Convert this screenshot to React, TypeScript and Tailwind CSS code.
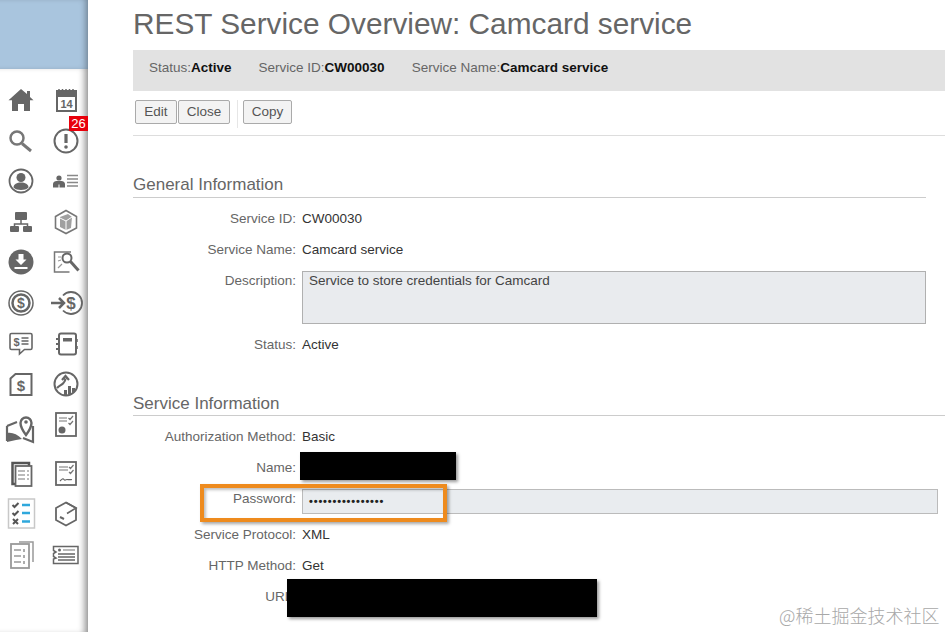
import React from 'react';

const G = '#666666';

const Icon = ({ children }: { children: React.ReactNode }) => (
    <svg viewBox="0 0 32 32" className="h-8 w-8 overflow-visible" fill="none" stroke={G} strokeWidth={2}>
        {children}
    </svg>
);

const sidebarIcons: React.ReactNode[] = [
    // home
    <path key="home" d="M16 5l6 5V7h3v6l3.500 3.200H25V27h-6v-7h-6v7H7V16.200H3.500z" fill={G} stroke="none" />,
    // calendar
    <g key="cal">
        <rect x="7" y="7" width="19" height="20" strokeWidth="2" />
        <rect x="7" y="7" width="19" height="6" fill={G} stroke="none" />
        <path d="M9 5v3M12.500 5v3M16 5v3M19.500 5v3M23 5v3" strokeWidth="1.500" />
        <text x="16.500" y="24" textAnchor="middle" fontSize="11" fontWeight="700" fill={G} stroke="none">14</text>
    </g>,
    // search
    <g key="search">
        <circle cx="12" cy="13" r="6.500" strokeWidth="2.500" stroke="#777777" />
        <path d="M17 18.500l9 7.500" strokeWidth="3" stroke="#777777" />
    </g>,
    // alert
    <g key="alert">
        <circle cx="16" cy="16" r="11.500" strokeWidth="2" />
        <path d="M16 9v9" strokeWidth="3.200" />
        <circle cx="16" cy="22" r="1.800" fill={G} stroke="none" />
    </g>,
    // user circle
    <g key="user">
        <circle cx="16" cy="16" r="11.500" strokeWidth="1.800" />
        <circle cx="16" cy="12.500" r="4.500" fill={G} stroke="none" />
        <path d="M8.500 22.500c0-3.500 3.500-5 7.500-5s7.500 1.500 7.500 5c-2 1.800-4.500 2.500-7.500 2.500s-5.500-.7-7.500-2.500z" fill={G} stroke="none" />
    </g>,
    // contact list
    <g key="contacts">
        <circle cx="9" cy="13" r="2.600" fill={G} stroke="none" />
        <path d="M3 22.500v-3.500c0-2 2-3 3.500-3h5c1.500 0 3.500 1 3.500 3v3.500h-5.500v-3h-1v3z" fill={G} stroke="none" />
        <path d="M17 10.500h11M17 14h11M17 17.500h11M17 21h11" strokeWidth="1.500" stroke="#888888" />
    </g>,
    // org chart
    <g key="org">
        <rect x="10" y="6" width="12" height="8" rx="1" fill={G} stroke="none" />
        <path d="M16 14v4M9.500 21v-3h13v3" strokeWidth="1.500" />
        <rect x="5" y="20" width="9" height="6" rx="1" fill={G} stroke="none" />
        <rect x="18" y="20" width="9" height="6" rx="1" fill={G} stroke="none" />
    </g>,
    // package
    <g key="pkg">
        <path d="M16 4.500l10.500 6v11.500L16 27.500 5.500 22V10.500z" strokeWidth="1.600" stroke="#777777" />
        <path d="M10 11l8-3 4 3-1 11-5 2-6-3z" fill="#a0a0a0" stroke="none" />
        <path d="M10 12l6 3 6-4M16 15v9" stroke="#ffffff" strokeWidth="1" />
    </g>,
    // download
    <g key="download">
        <circle cx="16" cy="16" r="12.500" fill={G} stroke="none" />
        <path d="M13.500 8h5v5.500h3L16 19l-5.500-5.500h3zM9.500 21h13v2h-13z" fill="#ffffff" stroke="none" />
    </g>,
    // chart search
    <g key="chart-search">
        <path d="M21 6H4.500v20h15" strokeWidth="1.500" stroke="#777777" />
        <path d="M8 22l4-4M8 11h3M8 15l3-1" strokeWidth="1.200" stroke="#999999" />
        <circle cx="17" cy="12" r="4.500" strokeWidth="2" />
        <path d="M20.500 15.500l8 9" strokeWidth="3" />
    </g>,
    // dollar circle
    <g key="dollar">
        <circle cx="16" cy="16" r="12" strokeWidth="1.500" />
        <circle cx="16" cy="16" r="8.500" strokeWidth="2.500" />
        <text x="16" y="21" textAnchor="middle" fontSize="14" fontWeight="700" fill={G} stroke="none">$</text>
    </g>,
    // arrow dollar
    <g key="arrow-dollar">
        <path d="M13 8.500a11 11 0 1 1 0 15" strokeWidth="1.800" />
        <path d="M1 16h12M9 11l5 5-5 5" strokeWidth="2.500" />
        <text x="21" y="22" textAnchor="middle" fontSize="17" fontWeight="700" fill={G} stroke="none">$</text>
    </g>,
    // chat bill
    <g key="chat">
        <path d="M6.500 5.500h19a1.500 1.500 0 0 1 1.500 1.500v13a1.500 1.500 0 0 1-1.500 1.500h-6l-5 4.500v-4.500h-8A1.500 1.500 0 0 1 5 20V7a1.500 1.500 0 0 1 1.500-1.500z" strokeWidth="1.600" />
        <text x="11.500" y="18" textAnchor="middle" fontSize="11" fontWeight="700" fill={G} stroke="none">$</text>
        <path d="M16.500 10h7M16.500 13h7M16.500 16h7" strokeWidth="1.500" />
    </g>,
    // notebook
    <g key="notebook">
        <path d="M9 7.500c0-1 .7-2 2-2h13c1 0 2 1 2 2v17c0 1-1 2-2 2H11c-1.300 0-2-1-2-2z" strokeWidth="2" />
        <rect x="13" y="10" width="9" height="3.500" fill={G} stroke="none" />
        <path d="M6 11h4M6 16h4M6 21h4" strokeWidth="2" />
        <path d="M27 11v3M27 18v3" strokeWidth="1.500" />
    </g>,
    // bill page
    <g key="bill">
        <path d="M5.500 10.500l5-4.500h16v21h-21z" strokeWidth="2" />
        <text x="16" y="22.500" textAnchor="middle" fontSize="15" fontWeight="700" fill={G} stroke="none">$</text>
    </g>,
    // growth
    <g key="growth">
        <circle cx="16" cy="16" r="11.500" strokeWidth="2" />
        <path d="M7 20c2-2.500 4-2.500 6-4.500 1.500-1.500 2.500-3 2.500-5M12 12l3.500-4 3.500 4" strokeWidth="2.200" />
        <path d="M14 27v-5h3v5zM18 27v-9h3v8zM22 25v-5h3v3z" fill={G} stroke="none" />
    </g>,
    // map pin
    <g key="map">
        <path d="M2 17l10-4M2 17v15M28 17v16l-10-4" strokeWidth="2.200" />
        <path d="M2 24c5-1 10 1 15 6l-6 1-9 2z" fill={G} stroke="none" />
        <path d="M21 26c-3-4-5.500-8-5.500-12a5.500 5.500 0 0 1 11 0c0 4-2.500 8-5.500 12z" fill="#ffffff" strokeWidth="2.400" />
        <circle cx="21" cy="13" r="1.800" fill={G} stroke="none" />
    </g>,
    // report
    <g key="report">
        <rect x="6" y="4" width="20" height="23" strokeWidth="1.800" />
        <path d="M9 9h8M9 12h8M18.500 9l1.500 1.500 3-3.500M18.500 14l1.500 1.500 3-3.500" strokeWidth="1.200" stroke="#777777" />
        <circle cx="12" cy="21" r="3.500" fill={G} stroke="none" />
    </g>,
];

const lowerIcons: React.ReactNode[] = [
    // document stack
    <g key="docs">
        <path d="M10 27H7.500V6H24v3" strokeWidth="2.500" stroke="#555555" />
        <rect x="10.500" y="9" width="16" height="20" strokeWidth="1.800" />
        <path d="M13 14h7M13 18h7M13 22h7M22 14h2M22 18h2M22 22h2" strokeWidth="1.100" stroke="#777777" />
    </g>,
    // signed report
    <g key="signed">
        <rect x="6" y="5" width="20" height="23" strokeWidth="1.800" />
        <path d="M9 10h9M9 13h9M19 10l1.500 1.500 3-3.500M19 15l1.500 1.500 3-3.500" strokeWidth="1.200" stroke="#777777" />
        <path d="M10 24c2-2 3-3 4-1.500s2 0 3 0 3 .5 5 0" strokeWidth="1.200" />
    </g>,
    // checklist, highlighted
    <g key="checklist">
        <rect x="3.500" y="1" width="26" height="29" stroke="#c8c8c8" strokeWidth="1.500" />
        <path d="M7.500 7l2 2 4-4M7.500 15l2 2 4-4M8 21l5 5M13 21l-5 5" strokeWidth="2" stroke="#555555" />
        <path d="M17 7h8M17 15h8M17 23.500h8" stroke="#2fa8dc" strokeWidth="2.400" />
    </g>,
    // cube
    <g key="cube">
        <path d="M16 4.500l10 5.500v12l-10 5.500-10-5.500V10z" strokeWidth="1.800" />
        <path d="M16 4.500l10 5.500-9 5.500" strokeWidth="1.600" />
        <path d="M10 19l4 2" strokeWidth="2" />
    </g>,
    // grey documents
    <g key="gdocs">
        <path d="M14 3h14v20" stroke="#999999" strokeWidth="1.500" />
        <rect x="6" y="5" width="18" height="24" stroke="#999999" strokeWidth="1.800" />
        <path d="M9 11h7M9 17h7M9 23h7M19 10v3M19 16v3M19 22v3" stroke="#999999" strokeWidth="1.600" />
    </g>,
    // ticket
    <g key="ticket">
        <path d="M3.500 7.500H28v17H3.500v-4.500l2.500-1-2.500-1.500v-3l2.500-1.500-2.500-1.500z" strokeWidth="1.500" />
        <circle cx="9.500" cy="11" r="1.500" fill={G} stroke="none" />
        <path d="M13 11h12" strokeWidth="1.200" stroke="#888888" />
        <path d="M8 15h17M8 18h17M8 21h17" strokeWidth="1.500" />
    </g>,
];

const Row = ({ label, children }: { label: string; children: React.ReactNode }) => (
    <div className="flex h-[31px] items-center gap-[6px] pt-[2px]">
        <div className="w-[163px] text-right text-[#666]">{label}</div>
        <div className="text-[#333]">{children}</div>
    </div>
);

const Heading = ({ children, className }: { children: string; className: string }) => (
    <div className={`mb-[5px] h-[26px] border-b border-[#ccc] text-[17px] leading-[24px] text-[#666] ${className}`}>
        {children}
    </div>
);

const Btn = ({ children, width }: { children: string; width: string }) => (
    <button className={`h-[24px] rounded-[2px] border border-[#aaa] bg-[#f3f3f3] text-[13.5px] leading-none text-[#555] ${width}`}>
        {children}
    </button>
);

const Meta = ({ label, value }: { label: string; value: string }) => (
    <span className="text-[#666]">
        {label}
        <b className="font-bold text-[#111]">{value}</b>
    </span>
);

export default function App() {
    return (
        <div className="relative flex h-[632px] w-[945px] overflow-hidden bg-white font-['Liberation_Sans',Arial,sans-serif] text-[13.5px]">
            <aside className="flex w-[88px] shrink-0 flex-col">
                <div className="h-[69px] bg-[#a9c5de] shadow-[inset_-5px_0_6px_-3px_rgba(0,0,0,0.35)]" />
                <div className="relative flex-1 pl-[5px] pt-[15px] shadow-[inset_-7px_0_7px_-4px_rgba(0,0,0,0.45)]">
                    <div className="grid grid-cols-[32px_32px] gap-x-[13px] gap-y-[8.6px]">
                        {sidebarIcons.map((icon, i) => (
                            <Icon key={i}>{icon}</Icon>
                        ))}
                    </div>
                    <div className="mt-[16px] grid grid-cols-[32px_32px] gap-x-[13px] gap-y-[9px]">
                        {lowerIcons.map((icon, i) => (
                            <Icon key={i}>{icon}</Icon>
                        ))}
                    </div>
                    <span className="absolute left-[69px] top-[47px] h-[15px] w-[19px] bg-[#e8000b] text-center text-[13px] leading-[15px] text-white">
                        26
                    </span>
                </div>
            </aside>

            <main className="flex-1 pl-[45px]">
                <h1 className="h-[50px] pt-[5px] text-[29.8px] leading-[38px] text-[#666]">
                    REST Service Overview: Camcard service
                </h1>
                <div className="flex h-[41px] gap-[27px] bg-[#e2e2e2] pl-[16px] pt-[9px] leading-[17px]">
                    <Meta label="Status:" value="Active" />
                    <Meta label="Service ID:" value="CW00030" />
                    <Meta label="Service Name:" value="Camcard service" />
                </div>
                <div className="flex h-[45px] items-start border-b border-[#ddd] pl-[2px] pt-[9px]">
                    <Btn width="w-[42px]">Edit</Btn>
                    <div className="ml-px">
                        <Btn width="w-[52px]">Close</Btn>
                    </div>
                    <div className="ml-[7px] mr-[5px] h-[28px] w-px bg-[#e6e6e6]" />
                    <Btn width="w-[49px]">Copy</Btn>
                </div>

                <Heading className="mr-[19px] mt-[36px] pt-px">General Information</Heading>
                <Row label="Service ID:">CW00030</Row>
                <Row label="Service Name:">Camcard service</Row>
                <div className="mt-[6px] flex gap-[6px]">
                    <div className="w-[163px] pt-px text-right leading-[18px] text-[#666]">Description:</div>
                    <div className="h-[53px] w-[624px] border border-[#b0b0b0] bg-[#e9ebee] px-[6px] leading-[18px] text-[#444]">
                        Service to store credentials for Camcard
                    </div>
                </div>
                <div className="mt-[5px]">
                    <Row label="Status:">Active</Row>
                </div>

                <Heading className="mt-[30px] pt-[2px]">Service Information</Heading>
                <Row label="Authorization Method:">Basic</Row>
                <Row label="Name:">{''}</Row>
                <div className="mt-[6px] flex h-[25px] gap-[6px]">
                    <div className="w-[163px] pt-px text-right leading-[18px] text-[#666]">Password:</div>
                    <div className="flex w-[636px] items-center border border-[#bbb] bg-[#e9ecef] pl-[6px] text-[#222]">
                        <span className="text-[11px] font-bold tracking-[0.85px]">••••••••••••••••</span>
                    </div>
                </div>
                <div className="mt-[5px]">
                    <Row label="Service Protocol:">XML</Row>
                </div>
                <Row label="HTTP Method:">Get</Row>
                <Row label="URL:">{''}</Row>
            </main>

            {/* redaction boxes and highlight drawn over the page */}
            <div className="absolute left-[300px] top-[452px] h-[28px] w-[156px] bg-black shadow-[2px_2px_3px_rgba(0,0,0,0.4)]" />
            <div className="absolute left-[287px] top-[579px] h-[38px] w-[310px] bg-black shadow-[2px_2px_3px_rgba(0,0,0,0.4)]" />
            <div className="absolute left-[200px] top-[484px] h-[38px] w-[247px] border-4 border-[#ee8b1e] shadow-[2px_2px_3px_rgba(0,0,0,0.35),inset_2px_2px_3px_rgba(0,0,0,0.25)]" />
            <div className="absolute left-[779px] top-[603px] font-['Noto_Sans_CJK_SC',sans-serif] text-[18px] font-light leading-[24px] text-[#a8a8a8]">
                @稀土掘金技术社区
            </div>
        </div>
    );
}
